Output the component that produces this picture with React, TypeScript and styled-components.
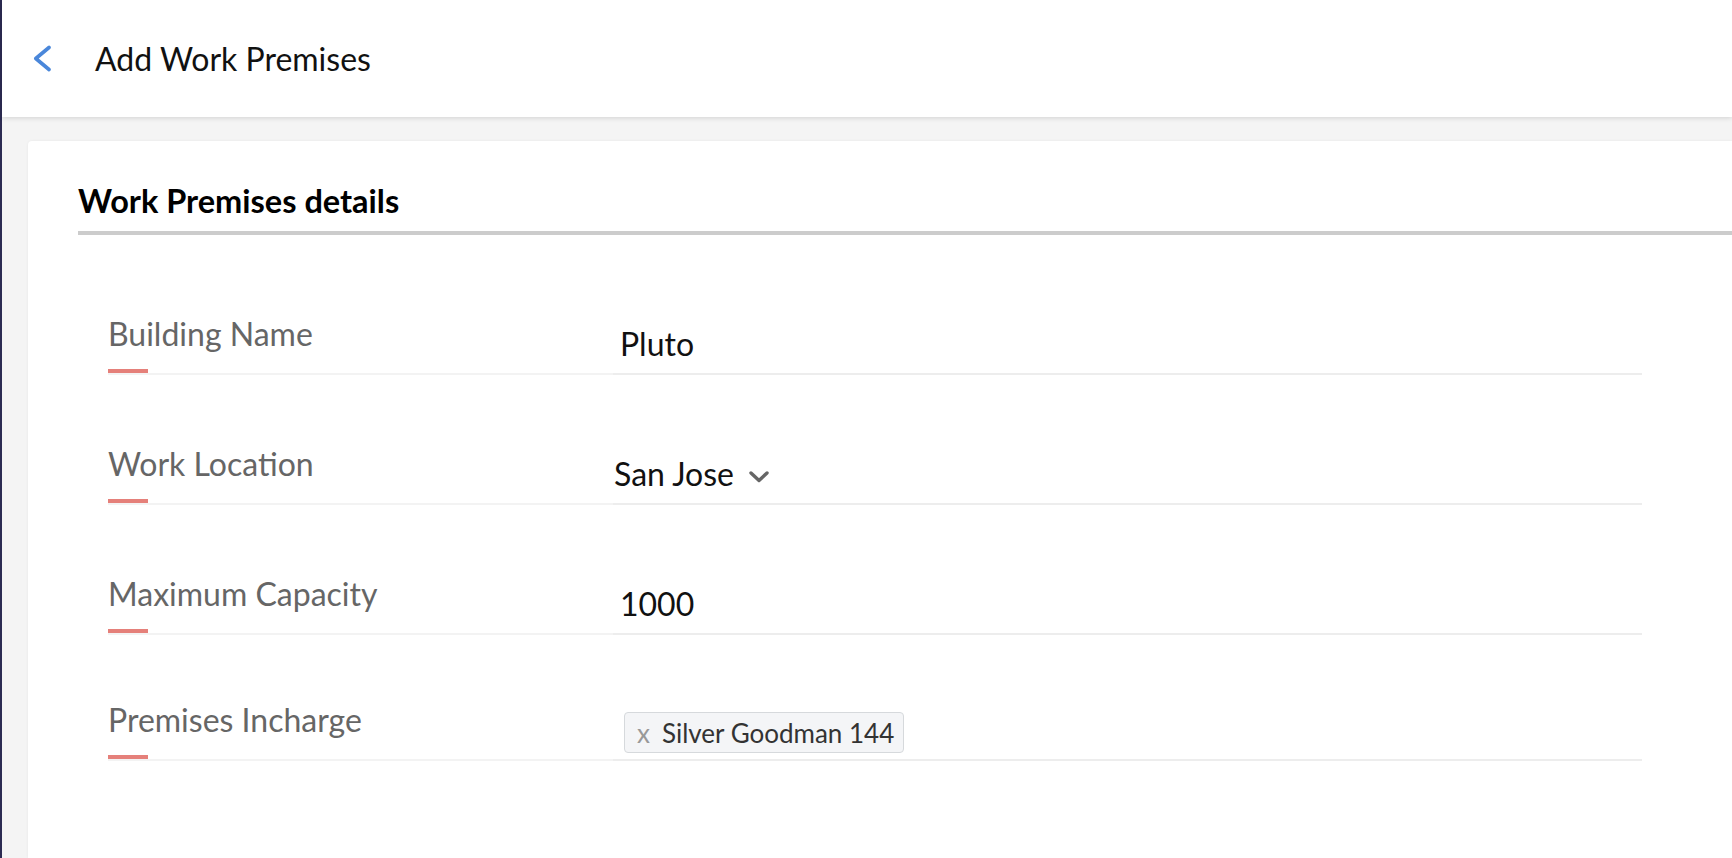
import * as React from 'react'
import styled, { createGlobalStyle } from 'styled-components'

const GlobalStyle = createGlobalStyle`
  html, body {
    margin: 0;
    padding: 0;
    background: #f4f4f4;
    font-family: Lato, 'Open Sans', 'Liberation Sans', sans-serif;
  }
  * { box-sizing: border-box; }
`

type Field = {
  label: string
  kind: 'text' | 'select' | 'chips'
  value: string
  height: number
}

const fields: Field[] = [
  { label: 'Building Name', kind: 'text', value: 'Pluto', height: 140 },
  { label: 'Work Location', kind: 'select', value: 'San Jose', height: 130 },
  { label: 'Maximum Capacity', kind: 'text', value: '1000', height: 130 },
  { label: 'Premises Incharge', kind: 'chips', value: 'Silver Goodman 144', height: 126 },
]

const BackIcon = () => (
  <svg width='21' height='28' viewBox='0 0 21 28' fill='none'>
    <path
      d='M17 2.5 L3.8 13.5 L17 24.5'
      stroke='#4a87da'
      strokeWidth='3.6'
      strokeLinecap='round'
      strokeLinejoin='round'
    />
  </svg>
)

const ChevronDown = () => (
  <svg width='22' height='14' viewBox='0 0 22 14' fill='none'>
    <path
      d='M3 3 L11 10.5 L19 3'
      stroke='#666'
      strokeWidth='3.4'
      strokeLinecap='round'
      strokeLinejoin='round'
    />
  </svg>
)

const App: React.FC = () => {
  return (
    <PageContainer>
      <GlobalStyle />
      <Header>
        <BackButton aria-label='Back'>
          <BackIcon />
        </BackButton>
        <Title>Add Work Premises</Title>
      </Header>
      <Content>
        <Card>
          <SectionTitle>Work Premises details</SectionTitle>
          <FormRows>
            {fields.map((f) => (
              <Row key={f.label} $height={f.height}>
                <LabelCell>
                  <Label>{f.label}</Label>
                  <Accent />
                </LabelCell>
                <ValueCell>
                  {f.kind === 'text' && <TextValue>{f.value}</TextValue>}
                  {f.kind === 'select' && (
                    <SelectValue>
                      {f.value}
                      <ChevronDown />
                    </SelectValue>
                  )}
                  {f.kind === 'chips' && (
                    <Chip>
                      <ChipRemove>x</ChipRemove>
                      {f.value}
                    </Chip>
                  )}
                </ValueCell>
              </Row>
            ))}
          </FormRows>
        </Card>
      </Content>
    </PageContainer>
  )
}

export default App

const PageContainer = styled.div`
  min-height: 100vh;
  display: flex;
  flex-direction: column;
  border-left: 2px solid #2c2b52;
  background: #f4f4f4;
`

const Header = styled.header`
  height: 117px;
  background: #fff;
  display: flex;
  align-items: center;
  padding-left: 30px;
  box-shadow: 0 1px 5px rgba(0, 0, 0, 0.14);
  position: relative;
  z-index: 2;
`

const BackButton = styled.button`
  border: 0;
  background: none;
  padding: 0;
  margin: 0 42px 0 0;
  display: flex;
  cursor: pointer;
`

const Title = styled.h1`
  margin: 0;
  font-size: 32px;
  line-height: 38px;
  font-weight: 400;
  color: #111;
`

const Content = styled.main`
  flex: 1;
  display: flex;
  padding: 24px 0 0 26px;
`

const Card = styled.section`
  flex: 1;
  background: #fff;
  border-radius: 4px 0 0 0;
  box-shadow: 0 0 3px rgba(0, 0, 0, 0.06);
  padding: 41px 0 0 50px;
`

const SectionTitle = styled.h2`
  margin: 0;
  font-size: 32.5px;
  line-height: 38px;
  font-weight: 700;
  color: #000;
  padding-bottom: 11px;
  border-bottom: 4px solid #cccccc;
`

const FormRows = styled.div`
  padding-left: 30px;
`

const Row = styled.div<{ $height: number }>`
  display: grid;
  grid-template-columns: 505px 1029px;
  align-items: end;
  height: ${(p) => p.$height}px;
`

const LabelCell = styled.div`
  display: flex;
  flex-direction: column;
  border-bottom: 2px solid #f3f3f3;
`

const Label = styled.div`
  font-size: 32px;
  line-height: 38px;
  color: #666;
  margin-bottom: 16px;
`

const Accent = styled.div`
  width: 40px;
  height: 4px;
  background: #e5807a;
`

const ValueCell = styled.div`
  border-bottom: 2px solid #ededed;
  display: flex;
  align-items: flex-end;
`

const TextValue = styled.div`
  font-size: 32px;
  line-height: 38px;
  color: #111;
  padding: 0 0 10px 7px;
`

const SelectValue = styled.div`
  display: flex;
  align-items: center;
  gap: 14px;
  font-size: 32px;
  line-height: 38px;
  color: #111;
  padding: 0 0 10px 1px;

  svg {
    margin-top: 6px;
  }
`

const Chip = styled.div`
  display: inline-flex;
  align-items: center;
  height: 41px;
  margin: 0 0 6px 11px;
  padding: 0 9px 0 12px;
  background: #f4f5f7;
  border: 1px solid #d6d9dc;
  border-radius: 4px;
  font-size: 26px;
  color: #333;
`

const ChipRemove = styled.span`
  color: #999;
  font-size: 26px;
  margin-right: 12px;
`
